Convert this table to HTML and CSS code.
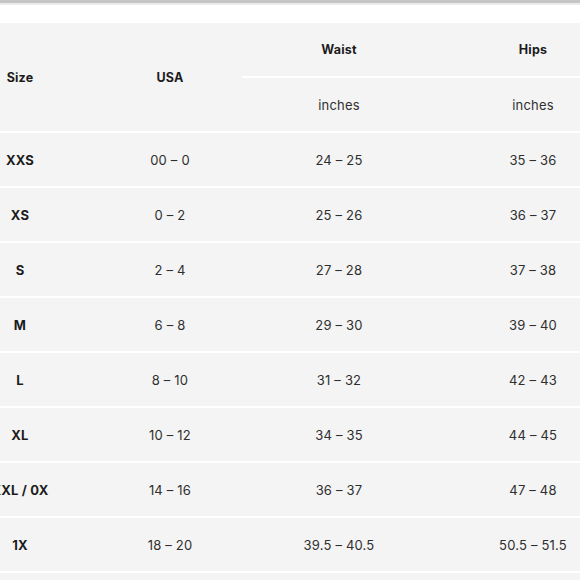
FILE: index.html
```html
<!DOCTYPE html>
<html>
<head>
<meta charset="utf-8">
<link rel="stylesheet" href="styles.css">
</head>
<body>
<div class="topbar"></div>
<div class="topgap"></div>
<div class="chart">
<table class="sizes">
  <colgroup>
    <col class="c-size"><col class="c-usa"><col class="c-meas"><col class="c-meas">
  </colgroup>
  <thead>
    <tr>
      <th rowspan="2" class="head">Size</th>
      <th rowspan="2" class="head">USA</th>
      <th class="head">Waist</th>
      <th class="head">Hips</th>
    </tr>
    <tr>
      <td>inches</td>
      <td>inches</td>
    </tr>
  </thead>
  <tbody>
    <tr><th>XXS</th><td>00 – 0</td><td>24 – 25</td><td>35 – 36</td></tr>
    <tr><th>XS</th><td>0 – 2</td><td>25 – 26</td><td>36 – 37</td></tr>
    <tr><th>S</th><td>2 – 4</td><td>27 – 28</td><td>37 – 38</td></tr>
    <tr><th>M</th><td>6 – 8</td><td>29 – 30</td><td>39 – 40</td></tr>
    <tr><th>L</th><td>8 – 10</td><td>31 – 32</td><td>42 – 43</td></tr>
    <tr><th>XL</th><td>10 – 12</td><td>34 – 35</td><td>44 – 45</td></tr>
    <tr><th>XXL / 0X</th><td>14 – 16</td><td>36 – 37</td><td>47 – 48</td></tr>
    <tr><th>1X</th><td>18 – 20</td><td>39.5 – 40.5</td><td>50.5 – 51.5</td></tr>
  </tbody>
</table>
<div class="rest"></div>
</div>
</body>
</html>
```
FILE: styles.css
```css
html, body {
  margin: 0;
  padding: 0;
  background: #ffffff;
  overflow: hidden;
  width: 580px;
  height: 580px;
}
body {
  font-family: "Inter", "Open Sans", sans-serif;
  color: #333333;
}
.topbar {
  height: 3px;
  background: #c5c5c5;
  border-bottom: 2px solid #ebebeb;
}
.topgap {
  height: 18px;
}
.chart {
  margin-left: -58px;
  width: 688px;
}
.sizes {
  border-collapse: collapse;
  table-layout: fixed;
  width: 688px;
  background: #f4f4f4;
}
.rest {
  height: 40px;
  background: #f4f4f4;
}
.c-size { width: 156px; }
.c-usa { width: 144px; }
.c-meas { width: 194px; }
.sizes th, .sizes td {
  height: 53px;
  padding: 0;
  text-align: center;
  vertical-align: middle;
  border-bottom: 2px solid #ffffff;
  font-size: 13px;
  letter-spacing: 0.2px;
}
.sizes th {
  font-weight: 700;
  color: #1c1c1c;
}
.sizes td {
  font-weight: 400;
  color: #2f2f2f;
}
.sizes .head {
  font-size: 12.5px;
}
```
